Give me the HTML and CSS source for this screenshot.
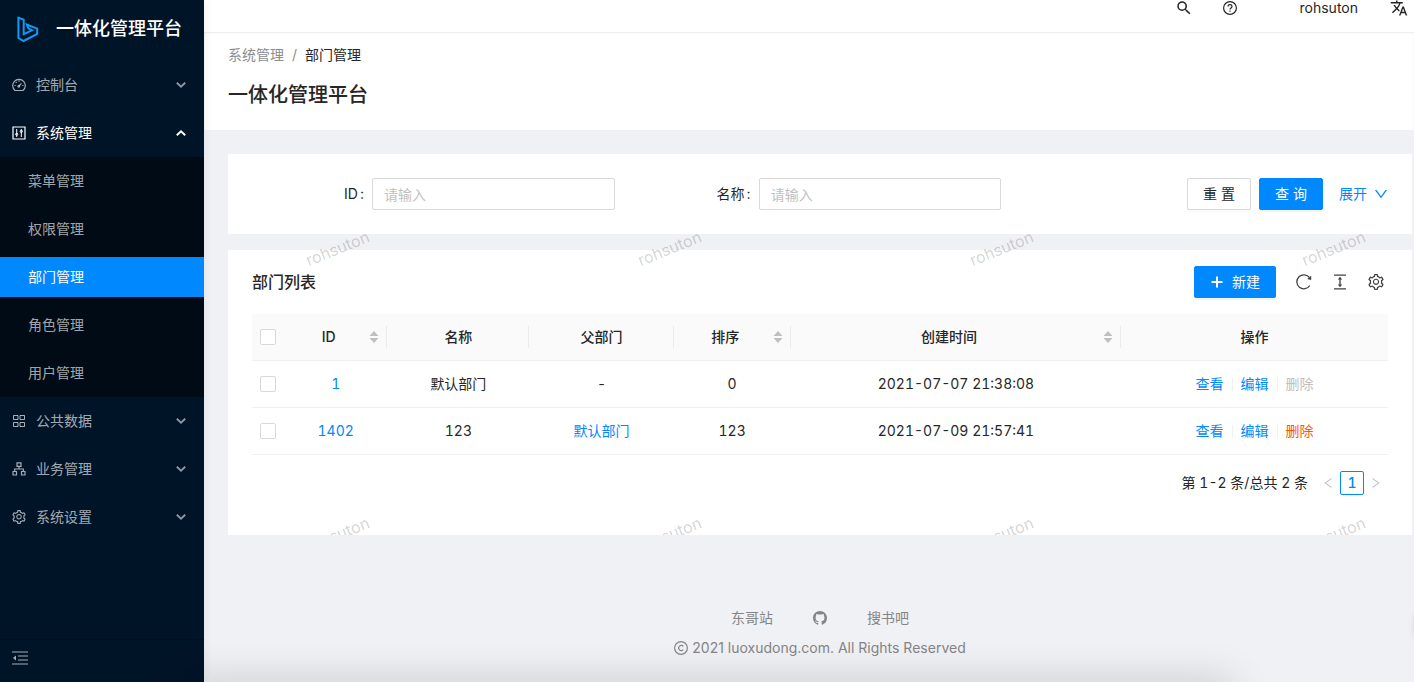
FILE: index.html
```html
<!DOCTYPE html>
<html lang="zh-CN">
<head>
<meta charset="utf-8">
<title>一体化管理平台</title>
<link rel="stylesheet" href="styles.css">
</head>
<body>
<svg class="sprite" aria-hidden="true">
  <symbol id="i-down" viewBox="64 64 896 896"><path fill="currentColor" d="M884 256h-75c-5.100 0-9.900 2.500-12.900 6.600L512 654.200 227.900 262.600c-3-4.100-7.800-6.600-12.900-6.600h-75c-6.500 0-10.300 7.400-6.500 12.700l352.600 486.100c12.800 17.600 39 17.600 51.700 0l352.600-486.100c3.900-5.300.1-12.700-6.400-12.700z"/></symbol>
  <symbol id="i-fold" viewBox="0 0 10 10"><path fill="none" stroke="currentColor" stroke-width="1.900" d="M.8 2.800L5 6.800 9.200 2.800"/></symbol>
  <symbol id="i-gear" viewBox="64 64 896 896"><path fill="currentColor" fill-rule="evenodd" d="M924.800 625.700l-65.500-56c3.100-19 4.700-38.400 4.700-57.800s-1.600-38.800-4.700-57.800l65.500-56a32.030 32.030 0 009.300-35.200l-.9-2.600a443.740 443.740 0 00-79.700-137.900l-1.800-2.100a32.120 32.120 0 00-35.100-9.500l-81.300 28.900c-30-24.600-63.500-44-99.700-57.600l-15.700-85a32.050 32.050 0 00-25.800-25.700l-2.700-.5c-52.100-9.400-106.900-9.400-159 0l-2.700.5a32.050 32.050 0 00-25.800 25.700l-15.800 85.400a351.860 351.860 0 00-99 57.400l-81.900-29.100a32 32 0 00-35.100 9.500l-1.800 2.100a446.020 446.020 0 00-79.700 137.900l-.9 2.600c-4.500 12.500-.8 26.500 9.300 35.200l66.300 56.600c-3.100 18.800-4.600 38-4.600 57.100 0 19.200 1.500 38.400 4.600 57.100L99 625.500a32.030 32.030 0 00-9.300 35.200l.9 2.600c18.100 50.400 44.900 96.900 79.700 137.900l1.800 2.100a32.120 32.120 0 0035.100 9.500l81.900-29.100c29.800 24.500 63.100 43.900 99 57.400l15.800 85.400a32.050 32.050 0 0025.800 25.700l2.700.5a449.400 449.400 0 00159 0l2.700-.5a32.050 32.050 0 0025.800-25.700l15.700-85a350 350 0 0099.700-57.600l81.300 28.900a32 32 0 0035.100-9.500l1.800-2.100c34.800-41.100 61.600-87.500 79.700-137.900l.9-2.600c4.500-12.300.8-26.300-9.300-35zM788.300 465.900c2.500 15.100 3.800 30.600 3.800 46.100s-1.300 31-3.800 46.100l-6.600 40.100 74.700 63.900a370.030 370.030 0 01-42.600 73.600L721 702.800l-31.400 25.800c-23.900 19.600-50.500 35-79.300 45.800l-38.100 14.300-17.900 97a377.500 377.500 0 01-85 0l-17.900-97.200-37.800-14.500c-28.500-10.800-55-26.200-78.700-45.700l-31.400-25.900-93.400 33.200c-17-22.900-31.200-47.600-42.600-73.600l75.500-64.500-6.500-40c-2.400-14.900-3.700-30.300-3.700-45.500 0-15.300 1.200-30.600 3.700-45.500l6.500-40-75.500-64.500c11.300-26.100 25.600-50.700 42.600-73.600l93.400 33.200 31.400-25.900c23.700-19.500 50.200-34.900 78.700-45.700l37.900-14.300 17.900-97.200c28.100-3.200 56.800-3.200 85 0l17.900 97 38.100 14.300c28.700 10.800 55.400 26.200 79.300 45.800l31.400 25.800 92.800-32.900c17 22.900 31.200 47.600 42.600 73.600L781.800 426l6.500 39.900zM512 326c-97.200 0-176 78.800-176 176s78.800 176 176 176 176-78.800 176-176-78.800-176-176-176zm0 64a112 112 0 110 224 112 112 0 010-224z"/></symbol>
  <symbol id="i-sort" viewBox="0 0 10 14"><path fill="#bfbfbf" d="M5 1l4.500 5h-9zM5 13l4.500-5h-9z"/></symbol>
</svg>

<div class="app">
  <aside class="side">
    <a class="brand" href="#">
      <svg class="brand-logo" width="24" height="28" viewBox="0 0 24 28"><path fill="none" stroke="#0a9cf8" stroke-width="2" d="M2.400 2.800L7.700 4.600V19.200L16 15.300 12.300 13.400 10.800 9.600 21.200 13.600V19L7.600 26 2.400 23z"/></svg>
      <span>一体化管理平台</span>
    </a>
    <nav class="menu">
      <button class="menu-item" type="button">
        <svg width="14" height="14" viewBox="0 0 14 14" fill="none" stroke="currentColor" stroke-width="1.200"><path d="M3 12.500A6.300 6.300 0 1 1 11 12.500zM6.800 8.200L9.500 5.400M7 2.500v1.200M3.800 4l.8.8M2.500 7.500h1.200M10.300 7.500h1.200"/><circle cx="6.800" cy="8.300" r=".8"/></svg>
        <span>控制台</span><svg class="arrow" width="10" height="10"><use href="#i-fold"/></svg>
      </button>
      <button class="menu-item is-open" type="button">
        <svg width="14" height="14" viewBox="0 0 14 14" fill="none" stroke="currentColor"><path stroke-width="1.200" d="M1 1h12v12H1z"/><path d="M4.700 3v8M9.300 3v8"/><circle cx="4.700" cy="8.300" r="1.100"/><circle cx="9.300" cy="5.400" r="1.100"/></svg>
        <span>系统管理</span><svg class="arrow" width="10" height="10"><use href="#i-fold"/></svg>
      </button>
      <div class="submenu">
        <a class="sub-item" href="#">菜单管理</a>
        <a class="sub-item" href="#">权限管理</a>
        <a class="sub-item is-active" href="#">部门管理</a>
        <a class="sub-item" href="#">角色管理</a>
        <a class="sub-item" href="#">用户管理</a>
      </div>
      <button class="menu-item" type="button">
        <svg width="14" height="14" viewBox="0 0 14 14" fill="none" stroke="currentColor"><path d="M1.500 1.500h4.500v4H1.500zM8 1.500h4.500v4H8zM1.500 8.500h4.500v4H1.500zM8 8.500h4.500v4H8z"/></svg>
        <span>公共数据</span><svg class="arrow" width="10" height="10"><use href="#i-fold"/></svg>
      </button>
      <button class="menu-item" type="button">
        <svg width="14" height="14" viewBox="0 0 14 14" fill="none" stroke="currentColor" stroke-width="1.200"><path d="M5 .8h4v3.500H5zM1 9.500h3.500V13H1zM9.500 9.500H13V13H9.500zM7 4.500V7M2.700 9.500V7h8.600v2.500"/></svg>
        <span>业务管理</span><svg class="arrow" width="10" height="10"><use href="#i-fold"/></svg>
      </button>
      <button class="menu-item" type="button">
        <svg width="14" height="14"><use href="#i-gear"/></svg>
        <span>系统设置</span><svg class="arrow" width="10" height="10"><use href="#i-fold"/></svg>
      </button>
    </nav>
    <button class="collapse" type="button" aria-label="收起菜单">
      <svg width="16" height="14" viewBox="0 0 16 14"><path fill="none" stroke="currentColor" stroke-width="1.200" d="M0 1h16M6 5h10M6 9h10M0 13h16"/><path fill="currentColor" d="M4 4.500v5L1 7z"/></svg>
    </button>
  </aside>

  <div class="main">
    <header class="topbar">
      <button class="icon-btn search-btn" type="button" aria-label="搜索"><svg width="18" height="18" viewBox="0 0 24 24"><path fill="currentColor" d="M15.500 14h-.79l-.28-.27A6.471 6.471 0 0 0 16 9.500 6.500 6.500 0 1 0 9.500 16c1.610 0 3.090-.59 4.230-1.570l.27.28v.79l5 4.990L20.490 19l-4.990-5zm-6 0C7.010 14 5 11.990 5 9.500S7.010 5 9.500 5 14 7.010 14 9.500 11.990 14 9.500 14z"/></svg></button>
      <button class="icon-btn help-btn" type="button" aria-label="帮助"><svg width="14" height="14" viewBox="0 0 14 14" fill="none" stroke="currentColor" stroke-width="1.200"><circle cx="7" cy="7" r="6.400"/><path d="M5 5.600c0-2.700 4-2.700 4 0C9 7 7 6.900 7 8.600M7 9.500v1.300"/></svg></button>
      <span class="user">rohsuton</span>
      <button class="icon-btn" type="button" aria-label="语言"><svg width="18" height="18" viewBox="0 0 24 24"><path fill="currentColor" fill-rule="evenodd" d="M12.870 15.070l-2.540-2.510.03-.03c1.740-1.940 2.980-4.170 3.710-6.530H17V4h-7V2H8v2H1v1.990h11.170C11.500 7.920 10.440 9.750 9 11.350 8.070 10.320 7.300 9.190 6.690 8h-2c.73 1.630 1.730 3.170 2.980 4.560l-5.090 5.020L4 19l5-5 3.110 3.110.76-2.040zM18.500 10h-2L12 22h2l1.120-3h4.750L21 22h2l-4.500-12zm-2.620 7l1.620-4.330L19.120 17h-3.240z"/></svg></button>
    </header>

    <div class="page-head">
      <nav class="crumbs"><a href="#">系统管理</a><span class="slash">/</span><span class="here">部门管理</span></nav>
      <h1>一体化管理平台</h1>
    </div>

    <main class="content">
      <div class="watermark" aria-hidden="true">
        <span>rohsuton</span><span>rohsuton</span><span>rohsuton</span><span>rohsuton</span>
        <span>rohsuton</span><span>rohsuton</span><span>rohsuton</span><span>rohsuton</span>
      </div>
      <form class="card query">
        <div class="field"><label for="f-id">ID<span class="colon">:</span></label><input id="f-id" type="text" placeholder="请输入"></div>
        <div class="field"><label for="f-name">名称<span class="colon">:</span></label><input id="f-name" type="text" placeholder="请输入"></div>
        <div class="query-actions">
          <button class="btn" type="reset">重 置</button>
          <button class="btn primary" type="button">查 询</button>
          <a class="expand" href="#">展开<svg width="14" height="14"><use href="#i-down"/></svg></a>
        </div>
      </form>

      <section class="card list">
        <div class="toolbar">
          <h2>部门列表</h2>
          <button class="btn primary create" type="button"><svg width="14" height="14" viewBox="0 0 14 14"><path stroke="currentColor" stroke-width="2" d="M7 1.500v11M1.500 7h11"/></svg>新建</button>
          <button class="icon-btn" type="button" aria-label="刷新"><svg width="16" height="16" viewBox="0 0 16 16"><path fill="none" stroke="currentColor" stroke-width="1.300" d="M13.800 11.500A7 7 0 1 1 13.500 3.700"/><path fill="currentColor" d="M15.200 1.800v4.100l-4-1z"/></svg></button>
          <button class="icon-btn" type="button" aria-label="密度"><svg width="16" height="16" viewBox="0 0 16 16"><path fill="none" stroke="currentColor" stroke-width="1.300" d="M2 1.200h12M2 14.800h12M8 4v8"/><path fill="currentColor" d="M8 2.800l2.200 2.800H5.800zM8 13.200l2.200-2.800H5.800z"/></svg></button>
          <button class="icon-btn" type="button" aria-label="列设置"><svg width="16" height="16"><use href="#i-gear"/></svg></button>
        </div>
        <table>
          <colgroup><col class="c-check"><col class="c-id"><col class="c-name"><col class="c-parent"><col class="c-sort"><col class="c-time"><col></colgroup>
          <thead>
            <tr>
              <th class="check"><input type="checkbox" aria-label="全选"></th>
              <th><div class="sorter"><span>ID</span><svg width="10" height="14"><use href="#i-sort"/></svg></div></th>
              <th>名称</th>
              <th>父部门</th>
              <th><div class="sorter"><span>排序</span><svg width="10" height="14"><use href="#i-sort"/></svg></div></th>
              <th><div class="sorter"><span>创建时间</span><svg width="10" height="14"><use href="#i-sort"/></svg></div></th>
              <th>操作</th>
            </tr>
          </thead>
          <tbody>
            <tr>
              <td class="check"><input type="checkbox" aria-label="选择 1"></td>
              <td><a href="#">1</a></td><td>默认部门</td><td>-</td><td>0</td><td>2021-07-07 21:38:08</td>
              <td><div class="ops"><a href="#">查看</a><a href="#">编辑</a><a class="off" aria-disabled="true">删除</a></div></td>
            </tr>
            <tr>
              <td class="check"><input type="checkbox" aria-label="选择 1402"></td>
              <td><a href="#">1402</a></td><td>123</td><td><a href="#">默认部门</a></td><td>123</td><td>2021-07-09 21:57:41</td>
              <td><div class="ops"><a href="#">查看</a><a href="#">编辑</a><a class="danger" href="#">删除</a></div></td>
            </tr>
          </tbody>
        </table>
        <div class="pager">
          <span>第 1-2 条/总共 2 条</span>
          <button class="page-btn prev" type="button" aria-label="上一页" disabled><svg width="12" height="12"><use href="#i-down"/></svg></button>
          <button class="page-btn current" type="button">1</button>
          <button class="page-btn next" type="button" aria-label="下一页" disabled><svg width="12" height="12"><use href="#i-down"/></svg></button>
        </div>
      </section>
    </main>

    <footer class="footer">
      <div class="links">
        <a href="#">东哥站</a>
        <a href="#" aria-label="GitHub"><svg width="14" height="14" viewBox="0 0 16 16"><path fill="currentColor" d="M8 0C3.580 0 0 3.580 0 8c0 3.540 2.290 6.530 5.470 7.590.4.070.55-.17.55-.38 0-.19-.01-.82-.01-1.490-2.010.37-2.530-.49-2.690-.94-.09-.23-.48-.94-.82-1.130-.28-.15-.68-.52-.01-.53.63-.01 1.080.58 1.230.82.72 1.210 1.870.87 2.330.66.070-.52.28-.87.51-1.070-1.780-.2-3.640-.89-3.640-3.950 0-.87.31-1.590.82-2.150-.08-.2-.36-1.020.08-2.120 0 0 .67-.21 2.200.82.64-.18 1.320-.27 2-.27s1.360.09 2 .27c1.530-1.040 2.200-.82 2.200-.82.44 1.100.16 1.920.08 2.120.51.56.82 1.270.82 2.150 0 3.070-1.870 3.750-3.650 3.950.29.25.54.73.54 1.480 0 1.070-.01 1.930-.01 2.200 0 .21.15.46.55.38A8.010 8.010 0 0016 8c0-4.420-3.580-8-8-8z"/></svg></a>
        <a href="#">搜书吧</a>
      </div>
      <div class="copy"><svg width="14" height="14" viewBox="0 0 14 14" fill="none" stroke="currentColor" stroke-width="1.200"><circle cx="7" cy="7" r="6.400"/><path d="M9.300 5.400a2.600 2.600 0 1 0 0 3.200"/></svg>2021 luoxudong.com. All Rights Reserved</div>
    </footer>
  </div>
</div>
<div class="dock-shade" aria-hidden="true"></div>
<div class="edge-shade" aria-hidden="true"></div>
</body>
</html>
```
FILE: styles.css
```css
* { box-sizing: border-box; }

html, body { height: 100%; }

body {
  margin: 0;
  overflow: hidden;
  background: #f0f1f5;
  color: #262626;
  font: 14px/22px Inter, "Noto Sans CJK SC", sans-serif;
}

a { color: #0088ff; text-decoration: none; }
button { font: inherit; color: inherit; border: 0; background: none; padding: 0; cursor: pointer; }
svg { display: block; flex: none; }
h1, h2 { margin: 0; font-weight: 500; }
.sprite { position: absolute; width: 0; height: 0; }

.app { display: flex; min-height: 100vh; }

/* Sidebar */
.side {
  display: flex;
  flex-direction: column;
  flex: none;
  width: 204px;
  background: #001428;
  color: rgba(255, 255, 255, .65);
  z-index: 2;
  box-shadow: 2px 0 8px rgba(29, 35, 41, .05);
}
.brand {
  display: flex;
  align-items: center;
  gap: 16px;
  height: 57px;
  padding-left: 16px;
  color: #fff;
  font-size: 18px;
  font-weight: 500;
}
.menu { flex: 1; padding-top: 8px; }
.menu-item {
  display: flex;
  align-items: center;
  gap: 10px;
  width: 100%;
  height: 40px;
  margin-bottom: 8px;
  padding: 0 18px 0 12px;
}
.menu-item .arrow { margin-left: auto; opacity: .85; }
.menu-item.is-open { color: #fff; margin-bottom: 4px; }
.menu-item.is-open .arrow { transform: rotate(180deg); opacity: 1; }
.submenu {
  display: flex;
  flex-direction: column;
  gap: 8px;
  padding: 4px 0;
  margin-bottom: 4px;
  background: #000b16;
}
.sub-item {
  height: 40px;
  padding-left: 28px;
  line-height: 40px;
  color: rgba(255, 255, 255, .65);
}
.sub-item.is-active { background: #0088ff; color: #fff; }
.collapse {
  display: flex;
  align-items: center;
  height: 43px;
  padding: 0 12px 6px;
  border-top: 1px solid #000d1c;
}

/* Top area */
.main { flex: 1; min-width: 0; }
.topbar {
  display: flex;
  align-items: center;
  justify-content: flex-end;
  height: 32px;
  padding: 0 6px 16px 0;
  background: #fff;
}
.search-btn { margin-right: 30px; }
.help-btn { margin-right: 63px; }
.user { margin-right: 32px; }
.page-head {
  padding: 12px 24px 19px;
  background: #fff;
  box-shadow: inset 0 1px 2px #e8eaec;
}
.crumbs { display: flex; }
.crumbs a { color: #8c8c8c; }
.slash { margin: 0 8px; color: #8c8c8c; }
.page-head h1 { margin-top: 13px; font-size: 20px; line-height: 32px; }

/* Content */
.content {
  position: relative;
  display: grid;
  gap: 16px;
  margin: 24px 2px 0 24px;
  overflow: hidden;
}
.card { background: #fff; padding: 0 24px; }
.watermark {
  position: absolute;
  z-index: 1;
  top: 83px;
  left: 76px;
  display: grid;
  grid-template-columns: repeat(4, 332px);
  row-gap: 264px;
  pointer-events: none;
}
.watermark span {
  width: 68px;
  font-size: 16px;
  color: rgba(0, 0, 0, .18);
  transform: rotate(-22deg);
}
.query {
  position: relative;
  z-index: 2;
  display: grid;
  grid-template-columns: repeat(3, 1fr);
  gap: 24px;
  padding: 24px;
}
.field { display: flex; align-items: center; }
.field label { flex: 0 0 120px; padding-right: 8px; text-align: right; }
.colon { margin-left: 2px; }
.field input {
  flex: 1;
  min-width: 0;
  height: 32px;
  padding: 4px 11px;
  border: 1px solid #d9d9d9;
  border-radius: 2px;
  font: inherit;
}
.field input::placeholder { color: #bfbfbf; }
.query-actions { display: flex; align-items: center; justify-content: flex-end; gap: 8px; }
.btn {
  height: 32px;
  min-width: 64px;
  border: 1px solid #d9d9d9;
  border-radius: 2px;
  background: #fff;
  box-shadow: 0 2px 0 rgba(0, 0, 0, .02);
}
.btn.primary {
  border-color: #0088ff;
  background: #0088ff;
  color: #fff;
  box-shadow: 0 2px 0 rgba(0, 0, 0, .04);
}
.expand { display: flex; align-items: center; gap: 7px; margin-left: 8px; }

.list { padding-bottom: 40px; font-variant-numeric: tabular-nums; }
.toolbar { display: flex; align-items: center; gap: 20px; padding: 16px 4px 16px 0; color: #404040; }
.toolbar h2 { flex: 1; font-size: 16px; line-height: 24px; color: #262626; }
.create { display: flex; align-items: center; gap: 8px; padding: 0 15px; }

table { width: 100%; border-collapse: separate; border-spacing: 0; table-layout: fixed; }
.c-check { width: 32px; }
.c-id { width: 9.1%; }
.c-name { width: 12.5%; }
.c-parent { width: 12.7%; }
.c-sort { width: 10.3%; }
.c-time { width: 29.1%; }
th, td { padding: 12px 8px; border-bottom: 1px solid #f0f0f0; text-align: center; font-weight: 400; }
th { background: #fafafa; font-weight: 500; }
thead th:not(:first-child):not(:last-child) {
  background: linear-gradient(#ebebeb, #ebebeb) right center / 1px 22px no-repeat #fafafa;
}
.check input {
  appearance: none;
  display: block;
  width: 16px;
  height: 16px;
  margin: 0;
  border: 1px solid #d9d9d9;
  border-radius: 2px;
  background: #fff;
}
.sorter { display: flex; align-items: center; gap: 4px; }
.sorter span { flex: 1; }
.ops { display: flex; justify-content: center; align-items: center; }
.ops a + a { display: flex; align-items: center; }
.ops a + a::before { content: ""; width: 1px; height: 13px; margin: 0 8px; background: #f0f0f0; }
.ops .off { color: #bfbfbf; }
.ops .danger { color: #ff5500; }

.pager { display: flex; justify-content: flex-end; align-items: center; margin-top: 16px; }
.pager > span { margin-right: 8px; }
.page-btn { display: flex; align-items: center; justify-content: center; width: 24px; height: 24px; }
.page-btn:disabled { color: #bfbfbf; }
.page-btn.current { border: 1px solid #0088ff; border-radius: 2px; color: #0088ff; font-weight: 500; }
.prev svg { transform: rotate(90deg); }
.next svg { transform: rotate(-90deg); }

/* Footer */
.footer { padding-top: 72px; margin: 0 2px 0 24px; color: #858585; }
.footer a { color: inherit; }
.links { display: flex; justify-content: center; align-items: center; gap: 40px; margin-bottom: 8px; }
.copy { display: flex; justify-content: center; align-items: center; gap: 4px; }

/* Soft shadows falling in from the window edges */
.dock-shade, .edge-shade { position: fixed; z-index: 3; pointer-events: none; }
.dock-shade {
  left: 190px;
  right: 190px;
  bottom: -26px;
  height: 20px;
  box-shadow: 0 0 40px 8px rgba(0, 0, 0, .16);
}
.edge-shade {
  right: -14px;
  top: 616px;
  width: 10px;
  height: 22px;
  box-shadow: 0 0 10px rgba(0, 0, 0, .3);
}
```
